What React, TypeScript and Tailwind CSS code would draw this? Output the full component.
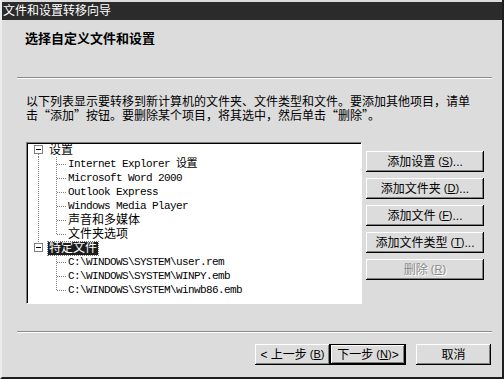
import React from "react";

type Row = {
  kind: "root" | "child";
  label: string;
  mono?: boolean;
  rootLine?: boolean;
  last?: boolean;
  first?: boolean;
  selected?: boolean;
};

const rows: Row[] = [
  { kind: "root", label: "设置", first: true },
  { kind: "child", label: "Internet Explorer 设置", mono: true, rootLine: true },
  { kind: "child", label: "Microsoft Word 2000", mono: true, rootLine: true },
  { kind: "child", label: "Outlook Express", mono: true, rootLine: true },
  { kind: "child", label: "Windows Media Player", mono: true, rootLine: true },
  { kind: "child", label: "声音和多媒体", rootLine: true },
  { kind: "child", label: "文件夹选项", rootLine: true, last: true },
  { kind: "root", label: "特定文件", selected: true },
  { kind: "child", label: "C:\\WINDOWS\\SYSTEM\\user.rem", mono: true },
  { kind: "child", label: "C:\\WINDOWS\\SYSTEM\\WINPY.emb", mono: true },
  { kind: "child", label: "C:\\WINDOWS\\SYSTEM\\winwb86.emb", mono: true, last: true },
];

const raised =
  "shadow-[inset_-1px_-1px_#000,inset_1px_1px_#fff,inset_-2px_-2px_#808080,inset_2px_2px_#dcdcdc]";

const TreeRow: React.FC<{ row: Row }> = ({ row }) => {
  if (row.kind === "root") {
    return (
      <div className="flex h-[14px] items-center">
        <svg width="20" height="14" className="shrink-0">
          {row.first ? (
            <line x1="10.5" y1="11" x2="10.5" y2="14" stroke="#808080" strokeDasharray="1 1" />
          ) : (
            <line x1="10.5" y1="0" x2="10.5" y2="2" stroke="#808080" strokeDasharray="1 1" />
          )}
          <rect x="6.5" y="2.5" width="8" height="8" fill="#fff" stroke="#808080" />
          <line x1="8" y1="6.5" x2="13" y2="6.5" stroke="#000" />
        </svg>
        <span
          className={
            row.selected
              ? "bg-[#1c1c1c] text-white outline-1 outline-dotted outline-[#777] px-[1px] leading-[13px]"
              : "px-[1px] leading-[13px]"
          }
        >
          {row.label}
        </span>
      </div>
    );
  }
  return (
    <div className="flex h-[14px] items-center">
      <svg width="40" height="14" className="shrink-0">
        {row.rootLine && (
          <line x1="10.5" y1="0" x2="10.5" y2="14" stroke="#808080" strokeDasharray="1 1" />
        )}
        <line
          x1="28.5"
          y1="0"
          x2="28.5"
          y2={row.last ? 8 : 14}
          stroke="#808080"
          strokeDasharray="1 1"
        />
        <line x1="29" y1="7.5" x2="39" y2="7.5" stroke="#808080" strokeDasharray="1 1" />
      </svg>
      <span
        className={
          row.mono
            ? "whitespace-pre font-['Liberation_Mono','Noto_Sans_CJK_SC',monospace] text-[11px] tracking-[-0.6px]"
            : "whitespace-pre"
        }
      >
        {row.label}
      </span>
    </div>
  );
};

const Btn: React.FC<{
  children: React.ReactNode;
  w?: string;
  disabled?: boolean;
  isDefault?: boolean;
}> = ({ children, w = "w-full", disabled, isDefault }) => (
  <div
    className={`${w} h-[21px] flex items-center justify-center bg-[#dcdcdc] ${raised} ${
      isDefault ? "border border-black" : ""
    } ${disabled ? "text-[#8a8a8a] [text-shadow:1px_1px_#fff]" : "text-black"}`}
  >
    {children}
  </div>
);

const Acc: React.FC<{ k: string }> = ({ k }) => (
  <span className="text-[11px] ml-[3px]">
    (<span className="underline">{k}</span>)
  </span>
);

const Separator: React.FC = () => (
  <div className="mx-[15px] w-[475px] h-[2px] border-t border-t-[#8c8c8c] border-b border-b-white" />
);

export default function App() {
  return (
    <div className="w-[504px] h-[379px] bg-[#dcdcdc] flex flex-col border-l-2 border-l-[#ececec] border-r-2 border-r-[#1e1e1e] border-b-2 border-b-[#1e1e1e] overflow-hidden font-['Liberation_Sans','Noto_Sans_CJK_SC',sans-serif] text-[12px] text-black">
      {/* 标题栏 */}
      <div className="mt-[2px] h-[18px] bg-[#2b2b2b] text-white flex items-center pl-[1px] leading-none">
        文件和设置转移向导
      </div>

      {/* 头部 */}
      <div className="h-[57px] pl-[23px] pt-[11px]">
        <div className="font-bold text-[13px] leading-[16px]">选择自定义文件和设置</div>
      </div>
      <Separator />

      {/* 内容 */}
      <div className="pl-[24px] pt-[15px] leading-[14px] whitespace-nowrap font-['Noto_Sans_CJK_SC',sans-serif]">
        <div>以下列表显示要转移到新计算机的文件夹、文件类型和文件。要添加其他项目，请单</div>
        <div>击“添加”按钮。要删除某个项目，将其选中，然后单击“删除”。</div>
      </div>

      <div className="flex mt-[20px] pl-[24px]">
        <div className="w-[336px] h-[162px] bg-white border-t border-l border-[#808080] border-r border-r-white border-b border-b-white shadow-[inset_1px_1px_#000] pl-[1px] leading-[13px]">
          {rows.map((r, i) => (
            <TreeRow key={i} row={r} />
          ))}
        </div>

        <div className="ml-[4px] w-[118px] pt-[9px] flex flex-col gap-[6px]">
          <Btn>
            添加设置<Acc k="S" />...
          </Btn>
          <Btn>
            添加文件夹<Acc k="D" />...
          </Btn>
          <Btn>
            添加文件<Acc k="F" />...
          </Btn>
          <Btn>
            添加文件类型<Acc k="T" />...
          </Btn>
          <Btn disabled>
            删除<Acc k="R" />
          </Btn>
        </div>
      </div>

      <div className="mt-[27px]">
        <Separator />
      </div>

      <div className="flex mt-[11px] pl-[253px]">
        <Btn w="w-[75px]">
          &lt; 上一步<Acc k="B" />
        </Btn>
        <Btn w="w-[76px]" isDefault>
          下一步<Acc k="N" /> &gt;
        </Btn>
        <div className="ml-[10px]">
          <Btn w="w-[75px]">取消</Btn>
        </div>
      </div>
    </div>
  );
}
